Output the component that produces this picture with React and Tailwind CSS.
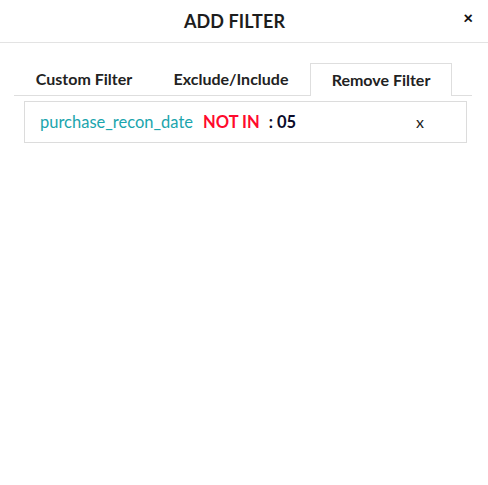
import React from "react";

const tabs = ["Custom Filter", "Exclude/Include", "Remove Filter"];

const App = () => {
  return (
    <div className="w-[488px] h-[485px] bg-white font-['Lato','Open_Sans',sans-serif] text-[#222]">
      {/* HEADER */}
      <div className="relative h-[43px] border-b border-[#e3e3e3] flex items-center justify-center pr-[19px]">
        <h1 className="text-[18px] font-bold tracking-[0.1px] text-[#1d1d1d]">ADD FILTER</h1>
        <button className="absolute right-[15px] top-[9px] text-[17px] font-black leading-none text-[#111]">
          ×
        </button>
      </div>

      {/* TABS */}
      <div className="pl-[14px] pr-[16px] pt-[20px]">
        <div className="flex h-[33px] border-b border-[#dedede]">
          <div className="w-[138px] flex items-center justify-center text-[16px] font-bold pl-[2px]">
            {tabs[0]}
          </div>
          <div className="w-[158px] flex items-center justify-center text-[16px] font-bold">
            {tabs[1]}
          </div>
          <div className="w-[142px] -mb-px bg-white border border-b-0 border-[#dedede] flex items-center justify-center text-[16px] font-bold">
            {tabs[2]}
          </div>
        </div>

        {/* FILTER ROW */}
        <div className="ml-[10px] mr-[5px] mt-[5px] h-[42px] border border-[#dcdcdc] flex items-center pl-[15px] text-[16.5px]">
          <span className="text-[#1aa5ad]">purchase_recon_date</span>
          <span className="ml-[10px] font-bold text-[#ff0a2d]">NOT IN</span>
          <span className="ml-[9px] font-bold text-[#0b0b2a]">: 05</span>
          <span className="ml-[120px] text-[16px] text-[#222]">x</span>
        </div>
      </div>
    </div>
  );
};

export default App;
